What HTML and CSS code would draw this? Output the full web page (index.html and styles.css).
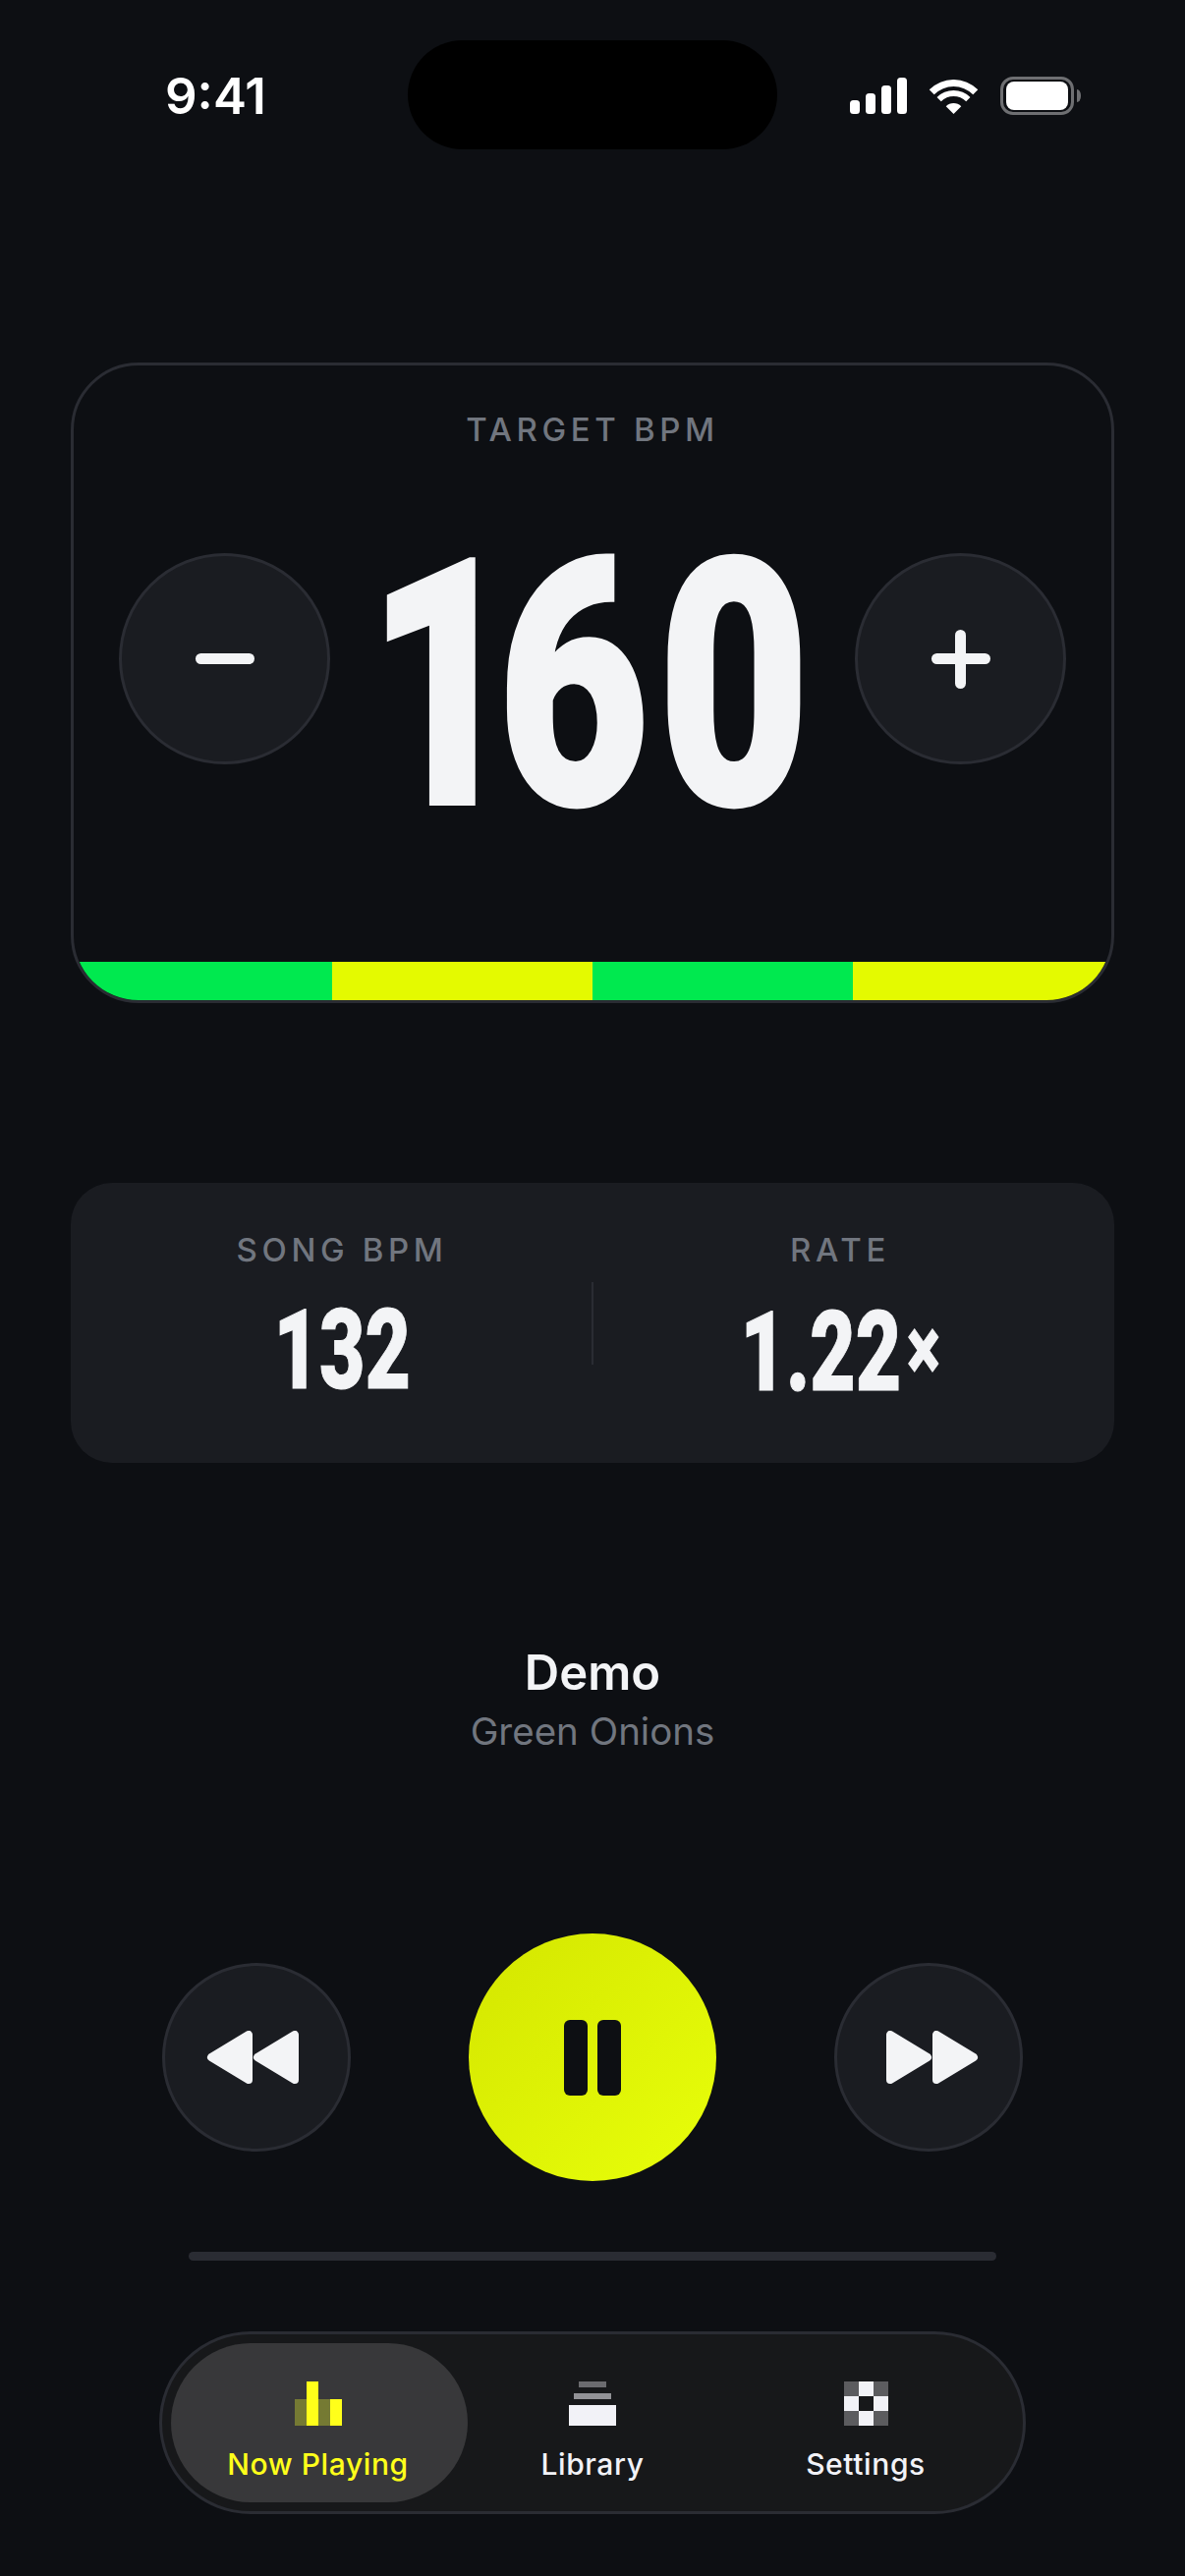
FILE: index.html
```html
<!DOCTYPE html>
<html lang="en">
<head>
<meta charset="utf-8">
<title>Now Playing</title>
<link rel="stylesheet" href="styles.css">
</head>
<body>
<main class="screen">
  <header class="status">
    <span class="time">9:41</span>
    <div class="island"></div>
    <div class="status-icons">
      <svg class="signal" width="58" height="37" viewBox="0 0 58 37"><rect x="0" y="23" width="10" height="14" rx="3.500"/><rect x="16" y="16" width="10" height="21" rx="3.500"/><rect x="32" y="8" width="10" height="29" rx="3.500"/><rect x="48" y="0" width="10" height="37" rx="3.500"/></svg>
      <svg class="wifi" width="51" height="35" viewBox="0 0 51 35"><path d="M0.750 10.250A35 35 0 0 1 50.250 10.250L45.300 15.200A28 28 0 0 0 5.700 15.200Z"/><path d="M8.530 18.030A24 24 0 0 1 42.470 18.030L38.230 22.270A18 18 0 0 0 12.770 22.270Z"/><path d="M17.720 27.220A11 11 0 0 1 33.280 27.220L25.500 35Z"/></svg>
      <div class="battery"><div class="battery-fill"></div></div>
    </div>
  </header>

  <section class="target">
    <div class="target-label">TARGET BPM</div>
    <div class="target-row">
      <button class="round-btn"><span class="minus"></span></button>
      <div class="big-number"><span class="squeeze"><span class="kern-one">1</span><span class="kern-six">6</span>0</span></div>
      <button class="round-btn"><span class="plus"></span></button>
    </div>
    <div class="strip">
      <span class="strip-green"></span><span class="strip-yellow"></span><span class="strip-green"></span><span class="strip-yellow"></span>
    </div>
  </section>

  <section class="stats">
    <div class="stat stat-left">
      <div class="stat-label">SONG BPM</div>
      <div class="stat-value"><span class="squeeze-small">132</span></div>
    </div>
    <div class="stat-divider"></div>
    <div class="stat stat-right">
      <div class="stat-label">RATE</div>
      <div class="stat-value"><span class="squeeze-small">1.22<span class="times">×</span></span></div>
    </div>
  </section>

  <section class="track">
    <div class="track-title">Demo</div>
    <div class="track-artist">Green Onions</div>
  </section>

  <section class="transport">
    <button class="skip skip-back">
      <svg width="96" height="54" viewBox="0 0 96 54"><path class="tri" d="M43 4V50L5 27Z M90 4V50L52 27Z"/></svg>
    </button>
    <button class="play"><span class="pause-bar"></span><span class="pause-bar"></span></button>
    <button class="skip skip-forward">
      <svg width="96" height="54" viewBox="0 0 96 54"><path class="tri" d="M6 4V50L44 27Z M53 4V50L91 27Z"/></svg>
    </button>
  </section>

  <div class="progress"></div>

  <nav class="tabs">
    <div class="tab tab-active">
      <svg class="tab-icon" width="48" height="45" viewBox="0 0 48 45"><rect class="y-dim" x="0" y="18" width="12" height="27"/><rect class="y-on" x="12" y="0" width="12" height="45"/><rect class="y-dim" x="24" y="18" width="12" height="27"/><rect class="y-on" x="36" y="18" width="12" height="27"/></svg>
      <span class="tab-label">Now Playing</span>
    </div>
    <div class="tab tab-mid">
      <svg class="tab-icon" width="48" height="45" viewBox="0 0 48 45"><rect class="w-low" x="10" y="0" width="28" height="6"/><rect class="w-mid" x="5" y="12" width="38" height="6"/><rect class="w-on" x="0" y="24" width="48" height="21"/></svg>
      <span class="tab-label">Library</span>
    </div>
    <div class="tab">
      <svg class="tab-icon" width="45" height="45" viewBox="0 0 45 45"><rect class="w-dim" x="0" y="0" width="15" height="15"/><rect class="w-on" x="15" y="0" width="15" height="15"/><rect class="w-dim" x="30" y="0" width="15" height="15"/><rect class="w-on" x="0" y="15" width="15" height="15"/><rect class="w-on" x="30" y="15" width="15" height="15"/><rect class="w-dim" x="0" y="30" width="15" height="15"/><rect class="w-on" x="15" y="30" width="15" height="15"/><rect class="w-dim" x="30" y="30" width="15" height="15"/></svg>
      <span class="tab-label">Settings</span>
    </div>
  </nav>
</main>
</body>
</html>
```

FILE: styles.css
```css
* { box-sizing: border-box; }
html, body { margin: 0; padding: 0; }
body {
  background: #0d0f13;
  color: #f3f4f6;
  font-family: Inter, "Liberation Sans", sans-serif;
}
button { padding: 0; font: inherit; color: inherit; }
.screen {
  width: 1206px;
  height: 2622px;
  overflow: hidden;
  display: flex;
  flex-direction: column;
  align-items: center;
  background: #0d0f13;
}

/* status bar */
.status {
  width: 100%;
  height: 111px;
  margin-top: 41px;
  position: relative;
  flex: none;
}
.time {
  position: absolute;
  left: 168px;
  top: 26px;
  font-size: 51px;
  line-height: 62px;
  font-weight: 600;
  color: #fff;
}
.island {
  position: absolute;
  left: 415px;
  top: 0;
  width: 376px;
  height: 111px;
  border-radius: 56px;
  background: #000;
}
.status-icons {
  position: absolute;
  left: 865px;
  top: 37px;
  display: flex;
  align-items: center;
  gap: 22px;
}
.signal, .wifi { fill: #fff; display: block; flex: none; }
.wifi { margin-top: 2px; }
.battery {
  position: relative;
  flex: none;
  width: 75px;
  height: 39px;
  border: 3px solid #6e6f72;
  border-radius: 13px;
  padding: 2px 3px;
}
.battery::after {
  content: "";
  position: absolute;
  right: -10px;
  top: 10px;
  width: 4px;
  height: 13px;
  border-radius: 0 4px 4px 0 / 0 6px 6px 0;
  background: #6e6f72;
}
.battery-fill {
  width: 100%;
  height: 100%;
  background: #fff;
  border-radius: 8px;
}

/* target card */
.target {
  flex: none;
  width: 1062px;
  height: 652px;
  margin-top: 217px;
  border: 3px solid #2a2c33;
  border-radius: 69px;
  overflow: hidden;
  display: flex;
  flex-direction: column;
  background: #0d0f13;
}
.target-label {
  margin-top: 45px;
  text-align: center;
  font-size: 33px;
  line-height: 40px;
  font-weight: 500;
  letter-spacing: 4.600px;
  color: #71767f;
}
.target-row {
  flex: none;
  height: 215px;
  display: flex;
  align-items: center;
  justify-content: space-between;
  padding: 0 46px;
  margin-top: 106px;
}
.round-btn {
  flex: none;
  width: 215px;
  height: 215px;
  border-radius: 50%;
  border: 3px solid #2a2c33;
  background: #1a1c21;
  display: flex;
  align-items: center;
  justify-content: center;
}
.minus, .plus {
  display: block;
  width: 60px;
  height: 11px;
  border-radius: 5.500px;
  background: #f3f4f6;
}
.plus { position: relative; }
.plus::after {
  content: "";
  position: absolute;
  left: 24.500px;
  top: -24.500px;
  width: 11px;
  height: 60px;
  border-radius: 5.500px;
  background: #f3f4f6;
}
.big-number {
  flex: none;
  width: 426px;
  margin-top: 54px;
  margin-right: 12px;
  display: flex;
  justify-content: center;
  font-family: Roboto, "Liberation Sans", sans-serif;
  font-weight: 900;
  font-size: 350px;
  line-height: 350px;
  color: #f3f4f6;
  white-space: nowrap;
}
.squeeze {
  display: block;
  flex: none;
  letter-spacing: -4px;
  -webkit-text-stroke: 4px #f3f4f6;
  transform: scaleX(0.76);
}
.kern-one { letter-spacing: -28px; }
.kern-six { letter-spacing: 12px; }
.strip {
  flex: none;
  height: 39px;
  margin-top: auto;
  display: grid;
  grid-template-columns: 263px 265px 265px 263px;
}
.strip-green { background: #00e94f; }
.strip-yellow { background: #e4fa00; }

/* stats card */
.stats {
  flex: none;
  width: 1062px;
  height: 285px;
  margin-top: 183px;
  border-radius: 42px;
  background: #1a1c21;
  display: grid;
  grid-template-columns: 1fr 2px 1fr;
  align-items: center;
}
.stat {
  height: 285px;
  display: flex;
  flex-direction: column;
  align-items: center;
  padding-top: 48px;
}
.stat-left { padding-left: 22px; }
.stat-right { padding-right: 28px; }
.stat-label {
  font-size: 33px;
  line-height: 40px;
  font-weight: 500;
  letter-spacing: 4.600px;
  color: #71767f;
}
.stat-value {
  margin-top: 26px;
  font-family: Roboto, "Liberation Sans", sans-serif;
  font-weight: 900;
  font-size: 113px;
  line-height: 113px;
  color: #f3f4f6;
  white-space: nowrap;
}
.squeeze-small {
  display: block;
  -webkit-text-stroke: 1px #f3f4f6;
  transform: scaleX(0.71);
}
.times {
  margin-left: 8px;
  font-size: 90px;
  vertical-align: 10px;
}
.stat-divider {
  width: 2px;
  height: 84px;
  background: #2a2c33;
}

/* track */
.track {
  flex: none;
  margin-top: 184px;
  text-align: center;
}
.track-title {
  font-size: 49px;
  line-height: 60px;
  font-weight: 600;
  color: #f3f4f6;
}
.track-artist {
  margin-top: 4px;
  font-size: 38.500px;
  line-height: 50px;
  color: #71767f;
}

/* transport */
.transport {
  flex: none;
  margin-top: 181px;
  display: flex;
  align-items: center;
  gap: 120px;
}
.skip {
  flex: none;
  width: 192px;
  height: 192px;
  border-radius: 50%;
  border: 3px solid #2a2c33;
  background: #1a1c21;
  display: flex;
  align-items: center;
  justify-content: center;
}
.skip-back svg { margin-right: 6px; }
.skip-forward svg { margin-left: 6px; }
.tri { fill: #f3f4f6; stroke: #f3f4f6; stroke-width: 8; stroke-linejoin: round; }
.play {
  flex: none;
  width: 252px;
  height: 252px;
  border: 0;
  border-radius: 50%;
  background: linear-gradient(135deg, #d4e600, #e8ff0a);
  display: flex;
  align-items: center;
  justify-content: center;
  gap: 10px;
}
.pause-bar {
  width: 24px;
  height: 77px;
  border-radius: 6px;
  background: #0d0f13;
}
.progress {
  flex: none;
  width: 822px;
  height: 9px;
  margin-top: 72px;
  border-radius: 5px;
  background: #2a2c33;
}

/* tabs */
.tabs {
  flex: none;
  width: 882px;
  height: 186px;
  margin-top: 72px;
  padding: 9px;
  border: 3px solid #2a2c33;
  border-radius: 93px;
  background: #17181a;
  display: flex;
}
.tab {
  width: 302px;
  display: flex;
  flex-direction: column;
  align-items: center;
  padding-top: 39px;
  border-radius: 81px;
}
.tab-mid { width: 254px; }
.tab-active { background: #38383a; padding-right: 3px; }
.tab-icon { display: block; }
.tab-label {
  margin-top: 21px;
  font-size: 30px;
  line-height: 36px;
  font-weight: 500;
  letter-spacing: 0.6px;
  color: #f2f2f7;
}
.tab-active .tab-label { color: #ffff1a; }
.y-on { fill: #ffff1a; }
.y-dim { fill: #757a33; }
.w-on { fill: #f2f2f7; }
.w-mid { fill: #929296; }
.w-low { fill: #6b6b6f; }
.w-dim { fill: #5c5c5f; }
```
